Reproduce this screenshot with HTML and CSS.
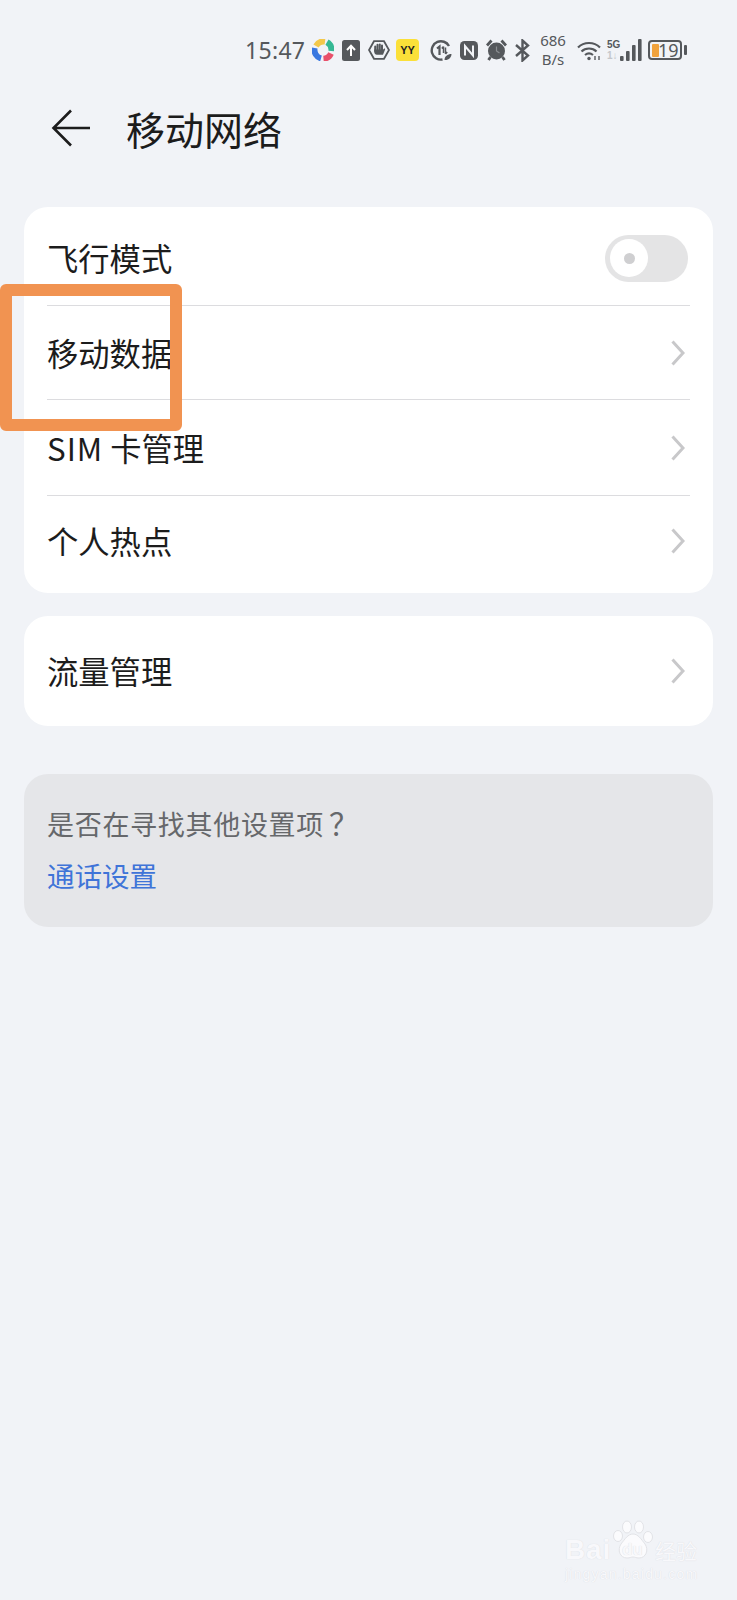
FILE: index.html
```html
<!DOCTYPE html>
<html lang="zh-CN">
<head>
<meta charset="utf-8">
<title>移动网络</title>
<link rel="stylesheet" href="styles.css">
</head>
<body>
<div class="page">
  <div class="status">
    <span class="time">15:47</span>
    <svg class="ic i-ring" width="22" height="22" viewBox="0 0 22 22" fill="none" stroke-width="6">
      <path d="M4 7A9 9 0 0 1 13 2.500" stroke="#f3c84b"/>
      <path d="M15 3.200A9 9 0 0 1 19.400 12" stroke="#35b894"/>
      <path d="M19 14.500A9 9 0 0 1 11.500 19.800" stroke="#e8506a"/>
      <path d="M9 19.400A9 9 0 0 1 2.600 9" stroke="#3a78e0"/>
    </svg>
    <svg class="ic i-up" width="18" height="21" viewBox="0 0 18 21">
      <rect width="18" height="21" rx="2.500" fill="#55585c"/>
      <path d="M9 16V6M5 10l4-4.200L13 10" fill="none" stroke="#fff" stroke-width="2"/>
    </svg>
    <svg class="ic i-hand" width="22" height="20" viewBox="0 0 22 20">
      <path d="M6 1.200h10L21 10l-5 8.800H6L1 10z" fill="none" stroke="#55585c" stroke-width="1.800"/>
      <path d="M7.200 6.500V11M9.500 4.800V10M11.800 4.500V10M14 5.500V10" fill="none" stroke="#55585c" stroke-width="2" stroke-linecap="round"/>
      <path d="M6.200 9.500h9l.8-.8c.8-.6 1.500.2 1 1L15 14.800H9C7 14.800 6.200 13 6.200 11.500z" fill="#55585c"/>
    </svg>
    <span class="yy">YY</span>
    <svg class="ic i-one" width="22" height="21" viewBox="0 0 22 21" fill="none" stroke="#55585c">
      <path d="M19 6A9.200 9.200 0 1 0 12.500 19.500" stroke-width="2.400"/>
      <path d="M7 8.500L9.500 6.500V15" stroke-width="2.200"/>
      <path d="M13.500 6.500V13M11.800 8.500l1.700-2M15.500 14V7.500M15.500 14l1.700-2" stroke-width="1.500"/>
      <path d="M14.500 20c0-3.500 3-6 7-6 0 3.500-3 6.500-7 6z" fill="#55585c" stroke="none"/>
    </svg>
    <svg class="ic i-nfc" width="18" height="19" viewBox="0 0 18 19">
      <rect width="18" height="19" rx="4.500" fill="#55585c"/>
      <path d="M5 14.500V5l8 9.500V4.500" fill="none" stroke="#f1f3f7" stroke-width="2"/>
    </svg>
    <svg class="ic i-alarm" width="21" height="22" viewBox="0 0 21 22">
      <circle cx="10.500" cy="12" r="8.500" fill="#55585c"/>
      <path d="M10.500 7.500V12l3 2" fill="none" stroke="#8b8e92" stroke-width="1.200"/>
      <path d="M1 6.500l4.500-5M20 6.500l-4.500-5M4.500 18l-2 3M16.500 18l2 3" stroke="#55585c" stroke-width="2.800" fill="none"/>
    </svg>
    <svg class="ic i-bt" width="15" height="23" viewBox="0 0 15 23">
      <path d="M1 6l12 10.500L7.500 21.500V1.500L13 6.500 1 17" fill="none" stroke="#55585c" stroke-width="2.400"/>
    </svg>
    <span class="speed"><span>686</span><span>B/s</span></span>
    <svg class="ic i-wifi" width="26" height="21" viewBox="0 0 26 21" fill="none" stroke="#55585c" stroke-width="2.200">
      <path d="M1 7.500C7 1.500 17 1.500 23 7.500"/>
      <path d="M4.500 11.500C8.500 7.500 15.500 7.500 19.500 11.500"/>
      <path d="M8 15c2.500-2 5.500-2 8 0"/>
      <circle cx="12" cy="18.500" r="1.700" fill="#55585c" stroke="none"/>
      <path d="M18 16v4M22 16v4" stroke-width="1.400"/>
    </svg>
    <span class="net">
      <span class="net-labels"><span class="g5">5G</span><span class="one">1↓</span></span>
      <svg width="22" height="22" viewBox="0 0 22 22" fill="#55585c">
        <rect x="0" y="17" width="3.600" height="5" rx="1"/>
        <rect x="6" y="12" width="3.600" height="10" rx="1"/>
        <rect x="12" y="6" width="3.600" height="16" rx="1"/>
        <rect x="18" y="0" width="3.600" height="22" rx="1"/>
      </svg>
    </span>
    <span class="battery"><span class="charge"></span><span class="level">19</span></span>
    <span class="nub"></span>
  </div>

  <header class="title-bar">
    <svg class="back" width="40" height="38" viewBox="0 0 40 38" fill="none" stroke="#1c1c1c" stroke-width="2.600">
      <path d="M39 19H3M20 1.500L2.500 19 20 36.500"/>
    </svg>
    <h1 class="title">移动网络</h1>
  </header>

  <section class="card main-card">
    <div class="row row-a">
      <span class="label">飞行模式</span>
      <span class="switch"><span class="knob"></span></span>
    </div>
    <div class="row row-b">
      <span class="label">移动数据</span>
      <svg class="chev" width="14" height="26" viewBox="0 0 14 26"><path d="M1.500 1.500L12 13 1.500 24.500"/></svg>
    </div>
    <div class="row row-c">
      <span class="label"><span class="latin">SIM</span> 卡管理</span>
      <svg class="chev" width="14" height="26" viewBox="0 0 14 26"><path d="M1.500 1.500L12 13 1.500 24.500"/></svg>
    </div>
    <div class="row row-d">
      <span class="label">个人热点</span>
      <svg class="chev" width="14" height="26" viewBox="0 0 14 26"><path d="M1.500 1.500L12 13 1.500 24.500"/></svg>
    </div>
  </section>

  <section class="card second-card">
    <div class="row row-e">
      <span class="label">流量管理</span>
      <svg class="chev" width="14" height="26" viewBox="0 0 14 26"><path d="M1.500 1.500L12 13 1.500 24.500"/></svg>
    </div>
  </section>

  <section class="hint">
    <p class="hint-q">是否在寻找其他设置项<span class="qm">？</span></p>
    <a class="hint-link">通话设置</a>
  </section>

  <div class="mark"></div>

  <div class="watermark">
    <div class="wm-top">
      <span class="wm-bai">Bai</span>
      <span class="wm-paw">
        <svg width="42" height="42" viewBox="0 0 42 42" fill="#fbfbfd" stroke="#e2e3e7" stroke-width="1">
          <ellipse cx="15" cy="7" rx="4.500" ry="6"/>
          <ellipse cx="27" cy="7" rx="4.500" ry="6"/>
          <ellipse cx="6" cy="16" rx="4.500" ry="5.500"/>
          <ellipse cx="36" cy="17" rx="4.500" ry="5.500"/>
          <path d="M21 14c5 0 8 5 12 10 4 6 1 14-6 14-3 0-4-1-6-1s-3 1-6 1c-7 0-10-8-6-14 4-5 7-10 12-10z"/>
        </svg>
        <span class="wm-du">du</span>
      </span>
      <span class="wm-jy">经验</span>
    </div>
    <div class="wm-url">jingyan.baidu.com</div>
  </div>
</div>
</body>
</html>
```

FILE: styles.css
```css
* { box-sizing: border-box; }
html, body { margin: 0; padding: 0; }
body {
  background: #f1f3f7;
  font-family: "Noto Sans CJK SC", "Noto Sans", sans-serif;
  color: #1c1c1c;
}
.page {
  position: relative;
  width: 737px;
  height: 1600px;
  overflow: hidden;
  background: #f1f3f7;
}

/* status bar */
.status {
  display: flex;
  align-items: center;
  height: 36px;
  margin-top: 32px;
  padding-left: 245px;
  color: #55585c;
}
.ic { display: block; flex: none; }
.time {
  font-family: "Noto Sans", sans-serif;
  font-size: 23px;
  line-height: 36px;
  width: 59px;
  letter-spacing: 0.3px;
}
.i-ring { margin-left: 8px; }
.i-up { margin-left: 8px; }
.i-hand { margin-left: 8px; }
.yy {
  width: 23px;
  height: 22px;
  margin-left: 6px;
  border-radius: 4px;
  background: #fbe039;
  color: #222;
  font: 700 11px/22px "Liberation Sans", sans-serif;
  text-align: center;
}
.i-one { margin-left: 11px; }
.i-nfc { margin-left: 8px; }
.i-alarm { margin-left: 8px; }
.i-bt { margin-left: 8px; }
.speed {
  display: flex;
  flex-direction: column;
  align-items: center;
  width: 28px;
  margin-left: 9px;
  font: 15px/19px "Noto Sans", sans-serif;
}
.i-wifi { margin-left: 10px; }
.net {
  display: flex;
  align-items: flex-end;
  margin-left: 4px;
}
.net-labels {
  display: flex;
  flex-direction: column;
  width: 12px;
  margin-right: 1px;
  font: 700 10px/11px "Liberation Sans", sans-serif;
  white-space: nowrap;
}
.g5 { color: #55585c; }
.one { color: #c4c6ca; }
.battery {
  display: flex;
  align-items: center;
  width: 34px;
  height: 20px;
  margin-left: 6px;
  border: 2px solid #55585c;
  border-radius: 4px;
}
.charge {
  width: 7px;
  height: 13px;
  margin-left: 2px;
  border-radius: 1px;
  background: #f0a23c;
}
.level {
  margin-left: -1px;
  font: 18px/16px "Noto Sans", sans-serif;
  color: #55585c;
}
.nub {
  width: 3px;
  height: 10px;
  margin-left: 2px;
  border-radius: 1px;
  background: #55585c;
}

/* title */
.title-bar {
  display: flex;
  align-items: center;
  height: 60px;
  margin-top: 30px;
  padding-left: 51px;
}
.back { flex: none; }
.title {
  margin: 0 0 0 35px;
  font-size: 39px;
  font-weight: 400;
  line-height: 60px;
  color: #1c1c1c;
}

/* cards */
.card {
  margin: 0 24px;
  background: #fff;
  border-radius: 24px;
}
.main-card { margin-top: 49px; }
.second-card { margin-top: 23px; }
.row {
  display: flex;
  align-items: center;
  justify-content: space-between;
  margin: 0 23px;
  padding-right: 5px;
  border-bottom: 1px solid #dcdcdf;
}
.row-a { height: 99px; padding-top: 4px; padding-right: 2px; }
.row-b { height: 94px; }
.row-c { height: 96px; }
.row-d { height: 97px; padding-bottom: 7px; border-bottom: 0; }
.row-e { height: 110px; border-bottom: 0; }
.label {
  font-size: 31.300px;
  line-height: 44px;
  color: #1c1c1c;
}
.latin { letter-spacing: 1px; }
.chev {
  flex: none;
  fill: none;
  stroke: #c8c8ca;
  stroke-width: 3;
}
.switch {
  display: flex;
  align-items: center;
  width: 83px;
  height: 47px;
  padding-left: 5px;
  border-radius: 24px;
  background: #e4e4e5;
}
.knob {
  display: flex;
  align-items: center;
  justify-content: center;
  width: 38px;
  height: 38px;
  border-radius: 50%;
  background: #fff;
}
.knob::after {
  content: "";
  width: 11px;
  height: 11px;
  border-radius: 50%;
  background: #cfcfd1;
}

/* hint */
.hint {
  height: 153px;
  margin: 48px 24px 0;
  padding: 27px 23px 0;
  border-radius: 24px;
  background: #e5e6e9;
}
.hint-q {
  margin: 0;
  font-size: 27px;
  line-height: 42px;
  color: #66686b;
  letter-spacing: 0.700px;
}
.qm { font-size: 30px; margin-left: 5px; }
.hint-link {
  display: block;
  margin-top: 10px;
  font-size: 27.500px;
  line-height: 40px;
  color: #3f74d8;
}

/* annotation rectangle */
.mark {
  position: absolute;
  left: 0;
  top: 284px;
  width: 182px;
  height: 147px;
  border: 12px solid #f19351;
  border-radius: 6px;
}

/* watermark */
.watermark {
  position: absolute;
  left: 565px;
  top: 1520px;
  width: 135px;
  color: #f8f8fb;
  text-shadow: 0 0 1px #d5d7dc;
}
.wm-top {
  display: flex;
  align-items: flex-end;
  height: 44px;
}
.wm-bai {
  font: 700 28px/28px "Liberation Sans", sans-serif;
  letter-spacing: 0.800px;
}
.wm-paw {
  position: relative;
  display: block;
  width: 42px;
  height: 44px;
  margin-left: 1px;
}
.wm-du {
  position: absolute;
  left: 10px;
  top: 20px;
  font: 700 17px/20px "Liberation Sans", sans-serif;
}
.wm-jy {
  font-size: 21px;
  line-height: 28px;
  margin-left: 1px;
}
.wm-url {
  margin-top: 3px;
  font: 14px/14px "Liberation Sans", sans-serif;
  letter-spacing: 1.200px;
  white-space: nowrap;
}
```
